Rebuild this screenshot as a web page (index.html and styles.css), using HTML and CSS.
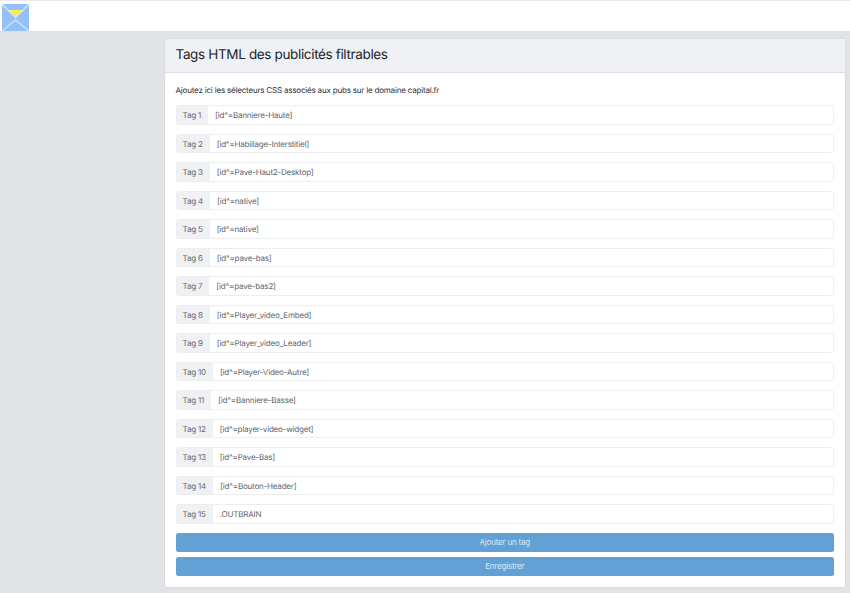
FILE: index.html
```html
<!DOCTYPE html>
<html lang="fr">
<head>
<meta charset="utf-8">
<title>Tags HTML des publicités filtrables</title>
<link rel="stylesheet" href="styles.css">
</head>
<body>
<header class="topbar">
<svg class="logo" width="27" height="27" viewBox="0 0 27 27" aria-hidden="true">
<rect width="27" height="27" fill="#93c1f5"/>
<path d="M6 6h15l-7.500 7z" fill="#f6ee4a"/>
<path d="M0 0l13.500 13.500L27 0M0 27l13.500-11L27 27" fill="none" stroke="#d3e6fb" stroke-width="1.300"/>
</svg>
</header>
<main class="layout">
<section class="card">
<h1 class="card-title">Tags HTML des publicités filtrables</h1>
<div class="card-body">
<p class="intro">Ajoutez ici les sélecteurs CSS associés aux pubs sur le domaine capital.fr</p>
<div class="tag"><span class="tag-label">Tag 1</span><span class="tag-value">[id^=Banniere-Haute]</span></div>
<div class="tag"><span class="tag-label">Tag 2</span><span class="tag-value">[id^=Habillage-Interstitiel]</span></div>
<div class="tag"><span class="tag-label">Tag 3</span><span class="tag-value">[id^=Pave-Haut2-Desktop]</span></div>
<div class="tag"><span class="tag-label">Tag 4</span><span class="tag-value">[id^=native]</span></div>
<div class="tag"><span class="tag-label">Tag 5</span><span class="tag-value">[id^=native]</span></div>
<div class="tag"><span class="tag-label">Tag 6</span><span class="tag-value">[id^=pave-bas]</span></div>
<div class="tag"><span class="tag-label">Tag 7</span><span class="tag-value">[id^=pave-bas2]</span></div>
<div class="tag"><span class="tag-label">Tag 8</span><span class="tag-value">[id^=Player_video_Embed]</span></div>
<div class="tag"><span class="tag-label">Tag 9</span><span class="tag-value">[id^=Player_video_Leader]</span></div>
<div class="tag"><span class="tag-label">Tag 10</span><span class="tag-value">[id^=Player-Video-Autre]</span></div>
<div class="tag"><span class="tag-label">Tag 11</span><span class="tag-value">[id^=Banniere-Basse]</span></div>
<div class="tag"><span class="tag-label">Tag 12</span><span class="tag-value">[id^=player-video-widget]</span></div>
<div class="tag"><span class="tag-label">Tag 13</span><span class="tag-value">[id^=Pave-Bas]</span></div>
<div class="tag"><span class="tag-label">Tag 14</span><span class="tag-value">[id^=Bouton-Header]</span></div>
<div class="tag"><span class="tag-label">Tag 15</span><span class="tag-value">.OUTBRAIN</span></div>
<div class="actions">
<button class="btn" type="button">Ajouter un tag</button>
<button class="btn" type="button">Enregistrer</button>
</div>
</div>
</section>
</main>
</body>
</html>
```
FILE: styles.css
```css
* { box-sizing: border-box; }
html, body { margin: 0; height: 100%; }
body {
  background: #e1e3e6;
  font-family: Inter, "Liberation Sans", sans-serif;
  font-size: 8px;
  letter-spacing: -0.190px;
  text-rendering: geometricPrecision;
  color: #212529;
  overflow: hidden;
}
.topbar {
  height: 32px;
  background: #fff;
  border-top: 1px solid #e8e9eb;
  border-bottom: 1px solid #dcdee1;
  padding: 3px 2px 0;
}
.logo { display: block; }
.layout { padding: 6px 4px 0 164px; }
.card {
  height: 550px;
  background: #fff;
  border: 1px solid #d9dbde;
  border-radius: 3px;
  overflow: hidden;
}
.card-title {
  margin: 0;
  height: 34px;
  padding: 0 10.500px 2px;
  display: flex;
  align-items: center;
  background: #eff1f4;
  border-bottom: 1px solid #dcdee2;
  font-size: 13.500px;
  font-weight: 400;
  letter-spacing: -0.350px;
  color: #212529;
}
.card-body { padding: 12px 11px 0 10.500px; }
.intro {
  margin: 0 0 9px;
  height: 11px;
  line-height: 11px;
  color: #2c3036;
}
.tag {
  display: flex;
  height: 19.500px;
  margin-bottom: 9px;
  border: 1px solid #eceef0;
  border-radius: 2.500px;
  overflow: hidden;
}
.tag-label {
  display: flex;
  align-items: center;
  padding: 1px 7px 0 6px;
  background: #eff1f4;
  color: #5f666d;
}
.tag-value {
  display: flex;
  flex: 1;
  align-items: center;
  padding: 1px 7px 0;
  background: #fff;
  color: #5f666d;
}
.actions {
  display: flex;
  flex-direction: column;
  gap: 4.500px;
}
.btn {
  height: 19.500px;
  padding: 0;
  border: 0;
  border-radius: 2.500px;
  background: #61a1d5;
  color: #dbe9f4;
  font: inherit;
  letter-spacing: inherit;
}
```
